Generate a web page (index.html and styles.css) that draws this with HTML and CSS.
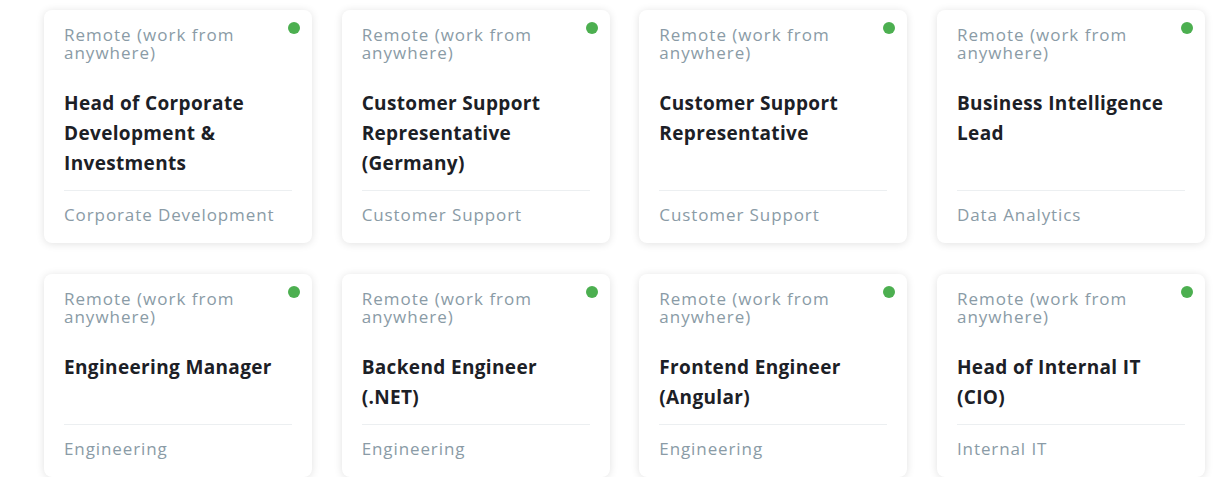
FILE: index.html
```html
<!DOCTYPE html>
<html lang="en">
<head>
<meta charset="utf-8">
<link rel="stylesheet" href="styles.css">
</head>
<body>
<div class="jobs">
  <a class="card">
    <span class="dot"></span>
    <div class="loc">Remote (work from anywhere)</div>
    <div class="title">Head of Corporate Development &amp; Investments</div>
    <div class="dept">Corporate Development</div>
  </a>
  <a class="card">
    <span class="dot"></span>
    <div class="loc">Remote (work from anywhere)</div>
    <div class="title">Customer Support Representative (Germany)</div>
    <div class="dept">Customer Support</div>
  </a>
  <a class="card">
    <span class="dot"></span>
    <div class="loc">Remote (work from anywhere)</div>
    <div class="title">Customer Support Representative</div>
    <div class="dept">Customer Support</div>
  </a>
  <a class="card">
    <span class="dot"></span>
    <div class="loc">Remote (work from anywhere)</div>
    <div class="title">Business Intelligence Lead</div>
    <div class="dept">Data Analytics</div>
  </a>
  <a class="card">
    <span class="dot"></span>
    <div class="loc">Remote (work from anywhere)</div>
    <div class="title">Engineering Manager</div>
    <div class="dept">Engineering</div>
  </a>
  <a class="card">
    <span class="dot"></span>
    <div class="loc">Remote (work from anywhere)</div>
    <div class="title">Backend Engineer (.NET)</div>
    <div class="dept">Engineering</div>
  </a>
  <a class="card">
    <span class="dot"></span>
    <div class="loc">Remote (work from anywhere)</div>
    <div class="title">Frontend Engineer (Angular)</div>
    <div class="dept">Engineering</div>
  </a>
  <a class="card">
    <span class="dot"></span>
    <div class="loc">Remote (work from anywhere)</div>
    <div class="title">Head of Internal IT (CIO)</div>
    <div class="dept">Internal IT</div>
  </a>
</div>
</body>
</html>
```

FILE: styles.css
```css
html, body {
  margin: 0;
  background: #ffffff;
}
body {
  font-family: "Open Sans", "Liberation Sans", sans-serif;
}
.jobs {
  display: grid;
  grid-template-columns: repeat(4, 268px);
  column-gap: 29.67px;
  row-gap: 31px;
  padding: 10px 0 0 44px;
}
.card {
  position: relative;
  display: flex;
  flex-direction: column;
  background: #fff;
  border-radius: 8px;
  box-shadow: 0 1px 8px rgba(0, 0, 0, 0.12);
  padding: 16px 20px 0;
  color: inherit;
  text-decoration: none;
}
.dot {
  position: absolute;
  top: 12px;
  right: 12px;
  width: 12px;
  height: 12px;
  border-radius: 50%;
  background: #4caf50;
}
.loc {
  font-size: 17px;
  line-height: 18px;
  color: #8a9ba6;
  padding-right: 30px;
  font-weight: 400;
  letter-spacing: 1px;
}
.title {
  margin-top: 26px;
  font-size: 19px;
  line-height: 30px;
  font-weight: 700;
  color: #1c2026;
  flex: 1;
  padding-bottom: 12px;
  border-bottom: 1px solid #eceff1;
  letter-spacing: 0.35px;
}
.dept {
  font-size: 17px;
  line-height: 20px;
  color: #8a9ba6;
  padding: 14px 0 18px;
  letter-spacing: 0.9px;
}
```
